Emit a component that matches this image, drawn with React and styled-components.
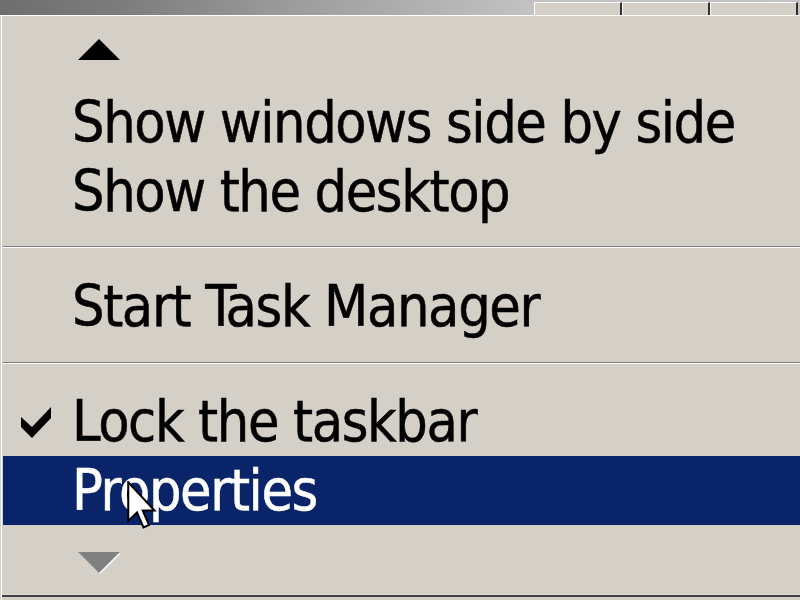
import React from "react";
import styled, { createGlobalStyle } from "styled-components";

const Global = createGlobalStyle`
  html, body { margin: 0; padding: 0; background: #d4d0c8; overflow: hidden; }
  body { font-family: "DejaVu Sans Condensed", "DejaVu Sans", Tahoma, sans-serif; }
`;

const Screen = styled.div`
  position: relative;
  width: 800px;
  height: 600px;
  display: flex;
  flex-direction: column;
  overflow: hidden;
  background: #d4d0c8;
`;

const TopStrip = styled.div`
  height: 15px;
  flex: none;
  display: flex;
  justify-content: flex-end;
  align-items: flex-end;
  padding-right: 2px;
  background: linear-gradient(to right, #6e6e6e 0%, #7c7c7c 15%, #9a9a9a 35%, #b4b4b4 55%, #c2c2c2 66%, #c4c4c4 100%);
`;

const TaskButton = styled.div`
  width: ${(p) => p.$w}px;
  height: 13px;
  box-sizing: border-box;
  background: #d4d0c8;
  border-top: 1px solid #ffffff;
  border-left: 1px solid #ffffff;
  border-right: 2px solid #303030;
`;

const Menu = styled.div`
  flex: 1;
  display: flex;
  flex-direction: column;
  border-top: 1px solid #ffffff;
  padding: 0 0 0 3px;
  box-shadow: inset 1px 0 0 #d4d0c8, inset 2px 0 0 #ffffff, inset 0 -3px 0 #d4d0c8, inset 0 -5px 0 #404040,
    inset 0 -6px 0 #e0ddd6;
  background: #d4d0c8;
`;

const ArrowRow = styled.div`
  height: ${(p) => p.$h}px;
  flex: none;
  display: flex;
  align-items: flex-start;
  padding-left: 75px;
  padding-top: ${(p) => p.$pt}px;
  box-sizing: border-box;
`;

const Item = styled.div`
  height: 69px;
  flex: none;
  display: flex;
  align-items: center;
  position: relative;
  padding-left: 69px;
  font-size: 57px;
  line-height: 69px;
  letter-spacing: -1.4px;
  white-space: nowrap;
  -webkit-text-stroke: 0.5px ${(p) => (p.$selected ? "#ffffff" : "#000000")};
  color: ${(p) => (p.$selected ? "#ffffff" : "#000000")};
  background: ${(p) => (p.$selected ? "#0a246a" : "transparent")};
`;

const Check = styled.svg`
  position: absolute;
  left: 18px;
  top: 20px;
`;

const Separator = styled.div`
  height: ${(p) => p.$h}px;
  flex: none;
  display: flex;
  flex-direction: column;
  padding-top: ${(p) => p.$pt}px;
  box-sizing: border-box;
  &::before {
    content: "";
    display: block;
    height: 1px;
    background: #808080;
  }
  &::after {
    content: "";
    display: block;
    height: 1px;
    background: #ffffff;
  }
`;

const Cursor = styled.svg`
  position: absolute;
  left: 127px;
  top: 481px;
`;

function UpArrow() {
  return (
    <svg width="42" height="21" viewBox="0 0 42 21">
      <polygon points="21,0 42,21 0,21" fill="#000" />
    </svg>
  );
}

function DownArrow() {
  return (
    <svg width="44" height="23" viewBox="0 0 44 23">
      <polygon points="1,1 43,1 22,22" fill="#ffffff" />
      <polygon points="0,0 42,0 21,21" fill="#808080" />
    </svg>
  );
}

export default function App() {
  return (
    <Screen>
      <Global />
      <TopStrip>
        <TaskButton $w={88} />
        <TaskButton $w={88} />
        <TaskButton $w={88} />
      </TopStrip>
      <Menu>
        <ArrowRow $h={72} $pt={23}>
          <UpArrow />
        </ArrowRow>
        <Item>Show windows side by side</Item>
        <Item>Show the desktop</Item>
        <Separator $h={46} $pt={20} />
        <Item>Start Task Manager</Item>
        <Separator $h={46} $pt={21} />
        <Item>
          <Check width="31" height="31" viewBox="0 0 31 31">
            <polygon points="0,10 11,20 30,0 30,11 11,31 0,20" fill="#000" />
          </Check>
          Lock the taskbar
        </Item>
        <Item $selected>Properties</Item>
        <ArrowRow $h={70} $pt={27}>
          <DownArrow />
        </ArrowRow>
      </Menu>
      <Cursor width="32" height="50" viewBox="0 0 12.8 20">
        <polygon
          points="0.5,0.5 0.5,16 4,12.6 6.6,18.6 8.8,17.6 6.3,11.8 11,11.8"
          fill="#ffffff"
          stroke="#000000"
          strokeWidth="0.8"
          strokeLinejoin="miter"
        />
      </Cursor>
    </Screen>
  );
}
